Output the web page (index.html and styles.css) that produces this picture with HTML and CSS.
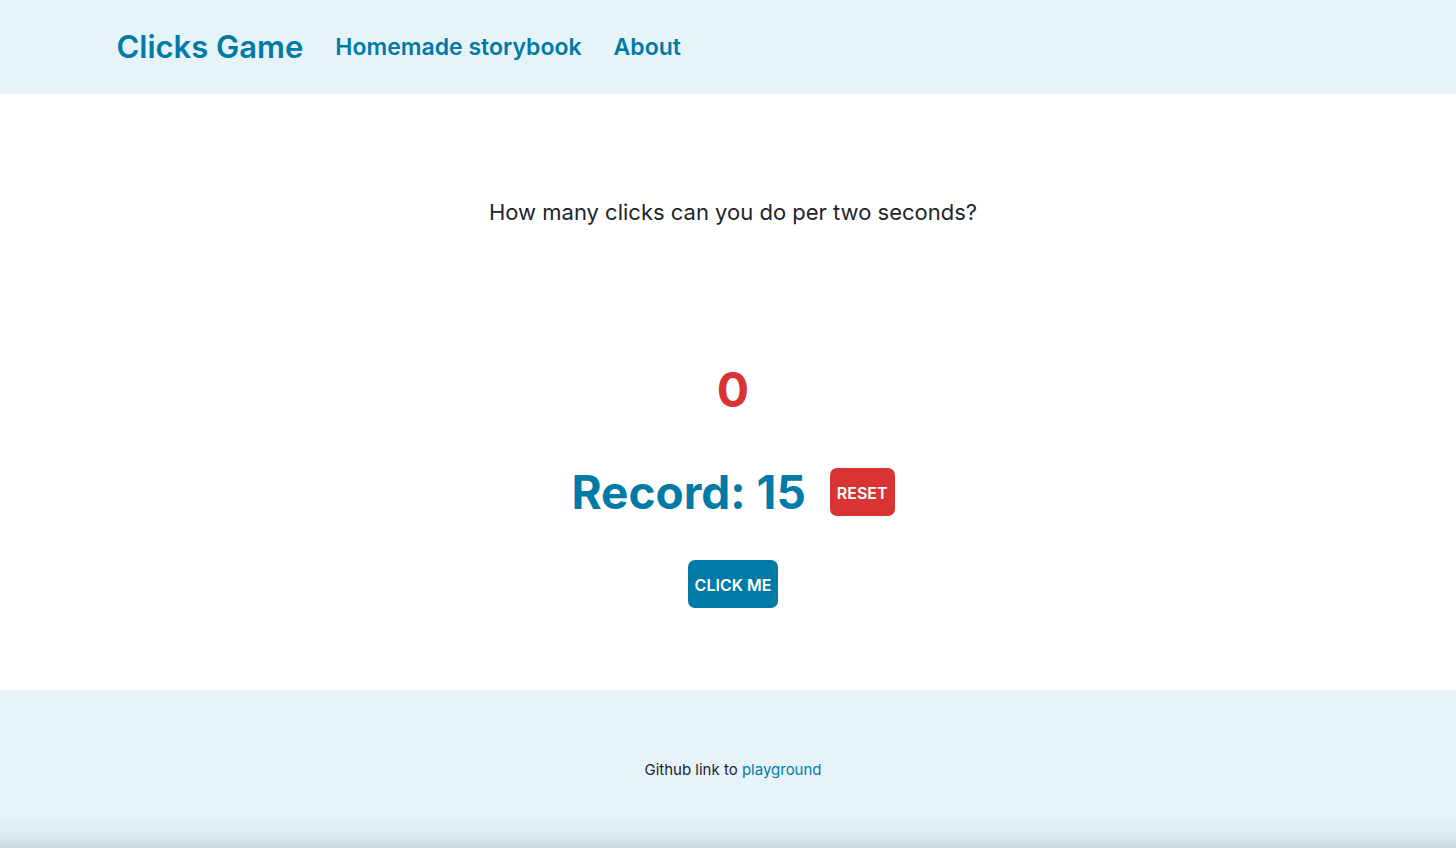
FILE: index.html
```html
<!DOCTYPE html>
<html lang="en">
<head>
<meta charset="utf-8">
<meta name="viewport" content="width=device-width, initial-scale=1">
<title>Clicks Game</title>
<link rel="stylesheet" href="styles.css">
</head>
<body>
<header class="header">
  <nav class="nav">
    <a class="brand" href="#">Clicks Game</a>
    <a class="nav-link" href="#">Homemade storybook</a>
    <a class="nav-link" href="#">About</a>
  </nav>
</header>
<main class="game">
  <p class="question">How many clicks can you do per two seconds?</p>
  <p class="count">0</p>
  <div class="record">
    <h1 class="record-title">Record: 15</h1>
    <button class="button button-reset" type="button">RESET</button>
  </div>
  <button class="button button-click" type="button">CLICK ME</button>
</main>
<footer class="footer">
  <p class="credit">Github link to <a class="credit-link" href="#">playground</a></p>
</footer>
</body>
</html>
```
FILE: styles.css
```css
* {
  box-sizing: border-box;
}

body {
  display: flex;
  flex-direction: column;
  min-height: 100vh;
  margin: 0;
  background: #fff;
  color: #212529;
  font-family: Inter, "Liberation Sans", sans-serif;
  font-size: 15px;
  line-height: 24px;
}

p,
h1 {
  margin: 0;
}

.header {
  padding: 24px 8%;
  background: #e6f4fa;
}

.nav {
  display: flex;
  align-items: center;
  gap: 32px;
}

.brand,
.nav-link {
  color: #007ba7;
  font-size: 23px;
  font-weight: 600;
  line-height: 46px;
  text-decoration: none;
}

.brand {
  font-size: 31px;
}

.game {
  display: flex;
  flex: 1;
  flex-direction: column;
  align-items: center;
  padding: 100px 0 82px 10px;
}

.question {
  font-size: 22px;
  line-height: 36px;
}

.count {
  margin-top: 124px;
  color: #d93434;
  font-size: 48px;
  font-weight: 700;
  line-height: 72px;
}

.record {
  display: flex;
  align-items: center;
  gap: 24px;
  margin: 30px 0 32px;
}

.record-title {
  color: #007ba7;
  font-size: 46px;
  font-weight: 700;
  line-height: 72px;
}

.button {
  height: 48px;
  padding: 2px 7px 0;
  border: 0;
  border-radius: 7px;
  color: #fff;
  font: inherit;
  font-size: 16px;
  font-weight: 600;
  cursor: pointer;
}

.button-reset {
  background: #d93434;
}

.button-click {
  background: #007ba7;
}

.footer {
  padding: 68px 0 66px 10px;
  background: linear-gradient(to top, #cbd9de 0, #dce9ee 12px, #e6f4fa 36px);
  text-align: center;
}

.credit-link {
  color: #007ba7;
  text-decoration: none;
}
```
